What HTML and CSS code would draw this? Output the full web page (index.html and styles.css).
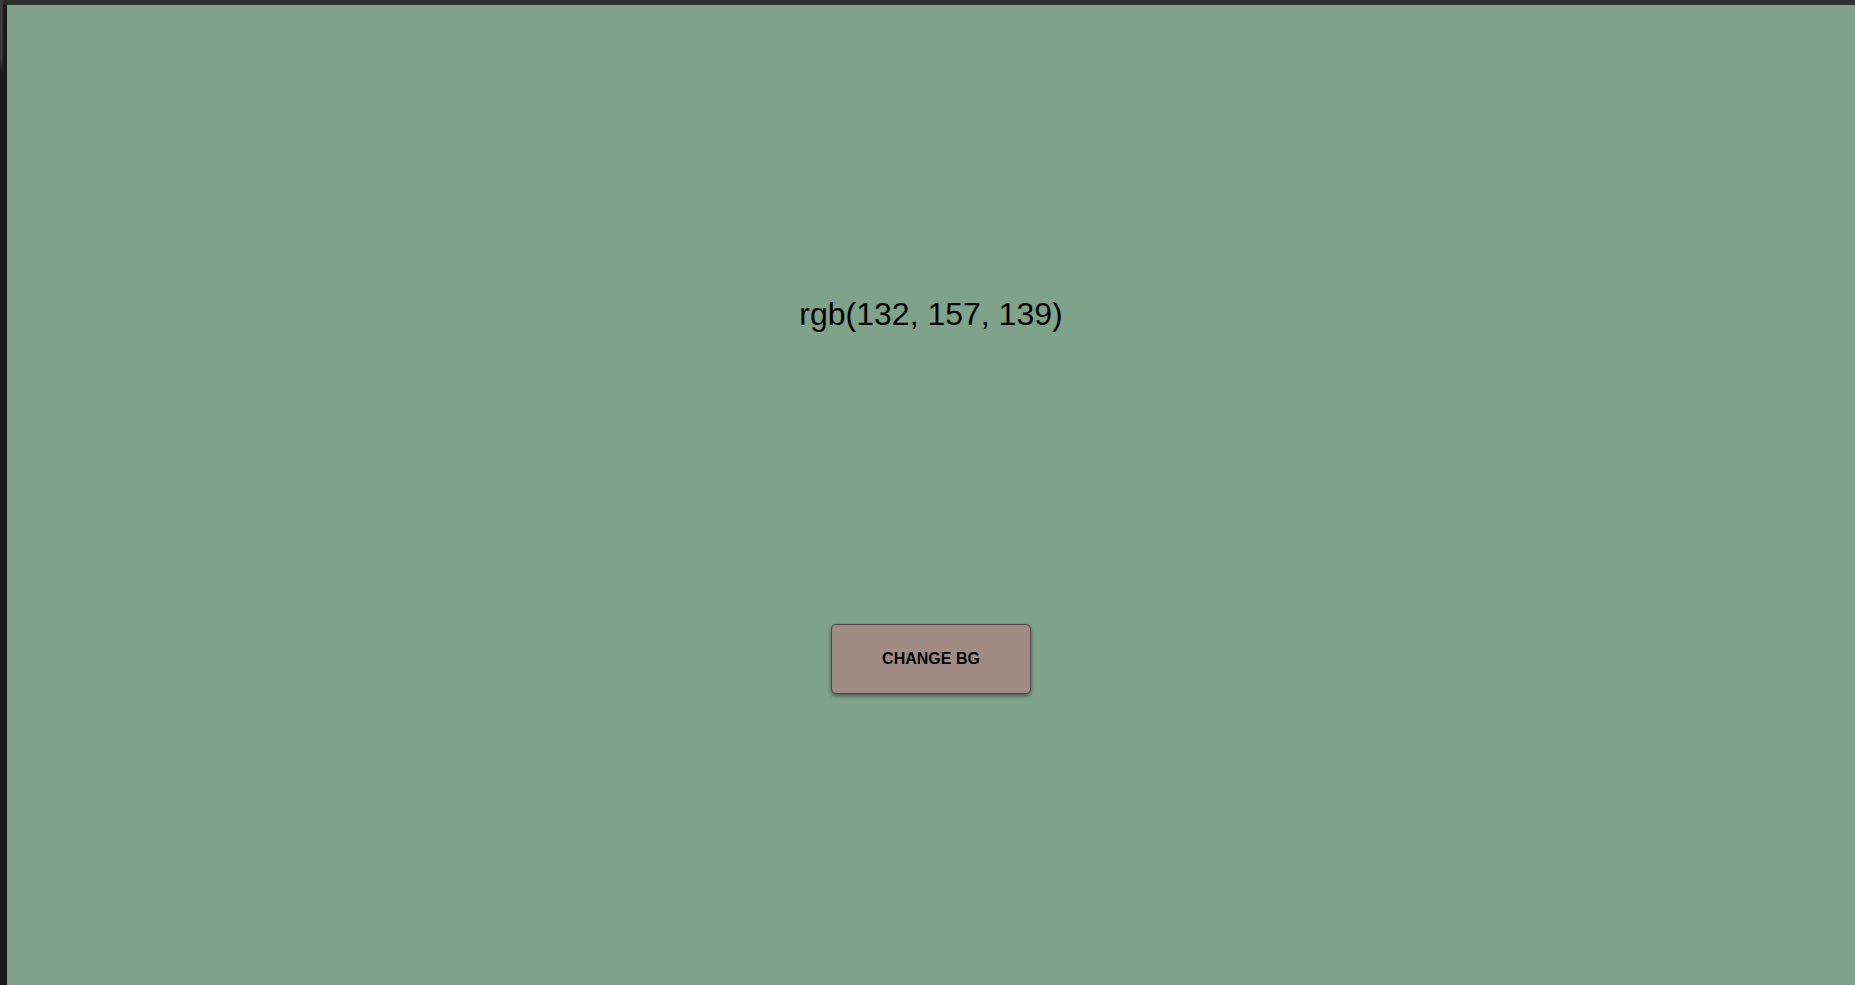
FILE: index.html
```html
<!DOCTYPE html>
<html lang="en">
<head>
<meta charset="utf-8">
<title>Change BG</title>
<link rel="stylesheet" href="styles.css">
</head>
<body>
<div class="shell">
  <div class="handle"></div>
  <main class="frame">
    <h1 class="value">rgb(132, 157, 139)</h1>
    <button class="change-btn" type="button">CHANGE BG</button>
  </main>
</div>
</body>
</html>
```

FILE: styles.css
```css
html, body {
  margin: 0;
  padding: 0;
  height: 100%;
}

body {
  background: #1a1a1a;
  overflow: hidden;
  font-family: "Liberation Sans", Arial, sans-serif;
}

.shell {
  position: relative;
  height: 100%;
  border-top: 5px solid #2f2f2f;
  box-sizing: border-box;
  padding-left: 7px;
}

.handle {
  position: absolute;
  left: 0;
  top: -5px;
  width: 3px;
  height: 72px;
  background: linear-gradient(#3c3c3c 0%, #383838 80%, #1a1a1a 100%);
}

.frame {
  height: 100%;
  background: #7fa38a;
  display: flex;
  flex-direction: column;
  align-items: center;
  padding-top: 291px;
  box-sizing: border-box;
}

.value {
  margin: 0;
  font-size: 32px;
  line-height: 37px;
  font-weight: normal;
  color: #000;
}

.change-btn {
  margin-top: 291px;
  width: 200px;
  height: 70px;
  background: #a08b85;
  border: 1px solid #4f4a47;
  border-radius: 5px;
  box-shadow: 0 2px 4px rgba(0, 0, 0, 0.45);
  font-family: "Liberation Sans", Arial, sans-serif;
  font-weight: bold;
  font-size: 16px;
  color: #000;
  cursor: pointer;
}
```
